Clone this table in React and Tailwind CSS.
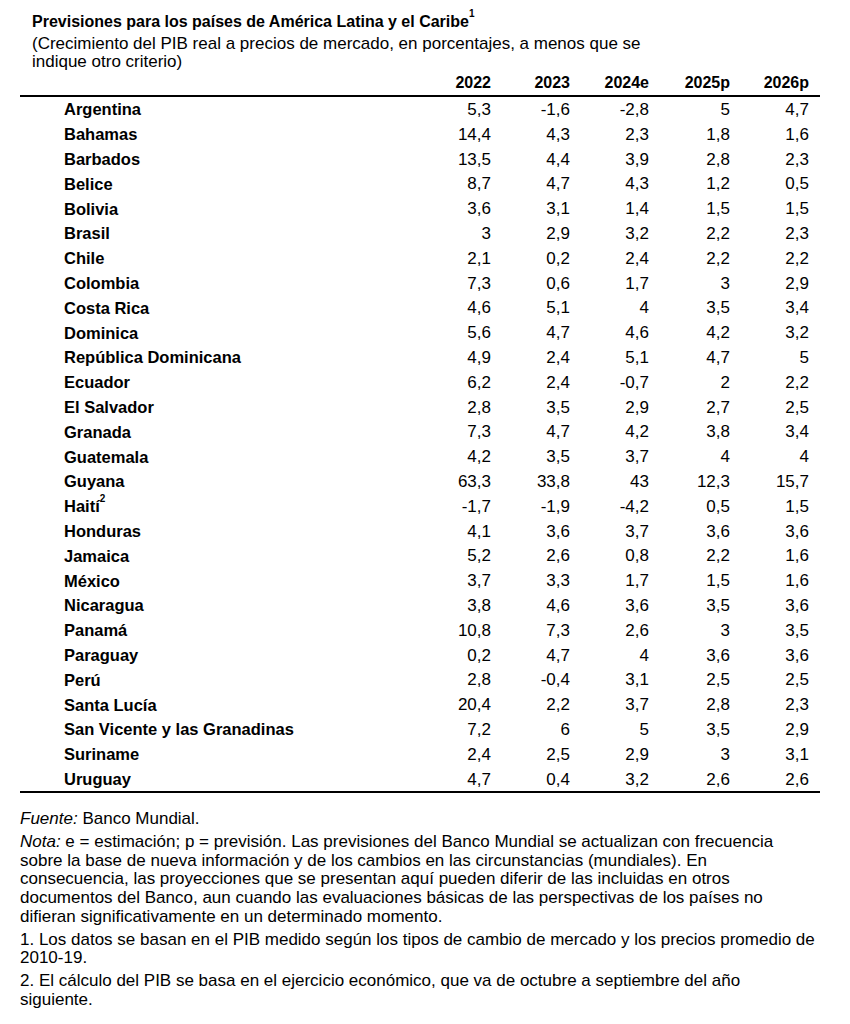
const rows = [
  ["Argentina", "5,3", "-1,6", "-2,8", "5", "4,7"],
  ["Bahamas", "14,4", "4,3", "2,3", "1,8", "1,6"],
  ["Barbados", "13,5", "4,4", "3,9", "2,8", "2,3"],
  ["Belice", "8,7", "4,7", "4,3", "1,2", "0,5"],
  ["Bolivia", "3,6", "3,1", "1,4", "1,5", "1,5"],
  ["Brasil", "3", "2,9", "3,2", "2,2", "2,3"],
  ["Chile", "2,1", "0,2", "2,4", "2,2", "2,2"],
  ["Colombia", "7,3", "0,6", "1,7", "3", "2,9"],
  ["Costa Rica", "4,6", "5,1", "4", "3,5", "3,4"],
  ["Dominica", "5,6", "4,7", "4,6", "4,2", "3,2"],
  ["República Dominicana", "4,9", "2,4", "5,1", "4,7", "5"],
  ["Ecuador", "6,2", "2,4", "-0,7", "2", "2,2"],
  ["El Salvador", "2,8", "3,5", "2,9", "2,7", "2,5"],
  ["Granada", "7,3", "4,7", "4,2", "3,8", "3,4"],
  ["Guatemala", "4,2", "3,5", "3,7", "4", "4"],
  ["Guyana", "63,3", "33,8", "43", "12,3", "15,7"],
  ["Haití", "-1,7", "-1,9", "-4,2", "0,5", "1,5", "2"],
  ["Honduras", "4,1", "3,6", "3,7", "3,6", "3,6"],
  ["Jamaica", "5,2", "2,6", "0,8", "2,2", "1,6"],
  ["México", "3,7", "3,3", "1,7", "1,5", "1,6"],
  ["Nicaragua", "3,8", "4,6", "3,6", "3,5", "3,6"],
  ["Panamá", "10,8", "7,3", "2,6", "3", "3,5"],
  ["Paraguay", "0,2", "4,7", "4", "3,6", "3,6"],
  ["Perú", "2,8", "-0,4", "3,1", "2,5", "2,5"],
  ["Santa Lucía", "20,4", "2,2", "3,7", "2,8", "2,3"],
  ["San Vicente y las Granadinas", "7,2", "6", "5", "3,5", "2,9"],
  ["Suriname", "2,4", "2,5", "2,9", "3", "3,1"],
  ["Uruguay", "4,7", "0,4", "3,2", "2,6", "2,6"],
];

const years = ["2022", "2023", "2024e", "2025p", "2026p"];
const grid = "grid grid-cols-[392px_79px_79px_79px_81px_79px] items-center";

export default function App() {
  return (
    <div className="min-h-screen w-[850px] bg-white text-black font-['Liberation_Sans',Arial,sans-serif] text-[17px]">
      <div className="px-[20px] pt-[13px]">
        {/* Title block */}
        <div className="pl-[12px]">
          <h1 className="font-bold text-[16px] leading-[18px]">
            Previsiones para los países de América Latina y el Caribe
            <sup className="text-[10px] leading-none align-[5px]">1</sup>
          </h1>
          <p className="mt-[4px] leading-[18px]">
            (Crecimiento del PIB real a precios de mercado, en porcentajes, a menos que se
            <br />
            indique otro criterio)
          </p>
        </div>

        {/* Table */}
        <div className="w-[800px]">
          <div className={`${grid} h-[26px] font-bold text-[16px] border-b-2 border-black`}>
            <div />
            {years.map((y) => (
              <div key={y} className="text-right">{y}</div>
            ))}
          </div>
          <div className="border-b-2 border-black">
            {rows.map((r) => (
              <div key={r[0]} className={`${grid} h-[24.8px]`}>
                <div className="pl-[44px] font-bold text-[16.5px]">
                  {r[0]}
                  {r[6] && <sup className="text-[10px] leading-none align-[5px]">{r[6]}</sup>}
                </div>
                {r.slice(1, 6).map((v, i) => (
                  <div key={i} className="text-right">{v}</div>
                ))}
              </div>
            ))}
          </div>
        </div>

        {/* Notes */}
        <div className="mt-[17px] w-[820px] leading-[18.7px] space-y-[4px] whitespace-nowrap">
          <p>
            <span className="italic">Fuente:</span> Banco Mundial.
          </p>
          <p>
            <span className="italic">Nota:</span> e = estimación; p = previsión. Las previsiones del Banco Mundial se actualizan con frecuencia
            <br />
            sobre la base de nueva información y de los cambios en las circunstancias (mundiales). En
            <br />
            consecuencia, las proyecciones que se presentan aquí pueden diferir de las incluidas en otros
            <br />
            documentos del Banco, aun cuando las evaluaciones básicas de las perspectivas de los países no
            <br />
            difieran significativamente en un determinado momento.
          </p>
          <p>
            1. Los datos se basan en el PIB medido según los tipos de cambio de mercado y los precios promedio de
            <br />
            2010-19.
          </p>
          <p>
            2. El cálculo del PIB se basa en el ejercicio económico, que va de octubre a septiembre del año
            <br />
            siguiente.
          </p>
        </div>
      </div>
    </div>
  );
}
